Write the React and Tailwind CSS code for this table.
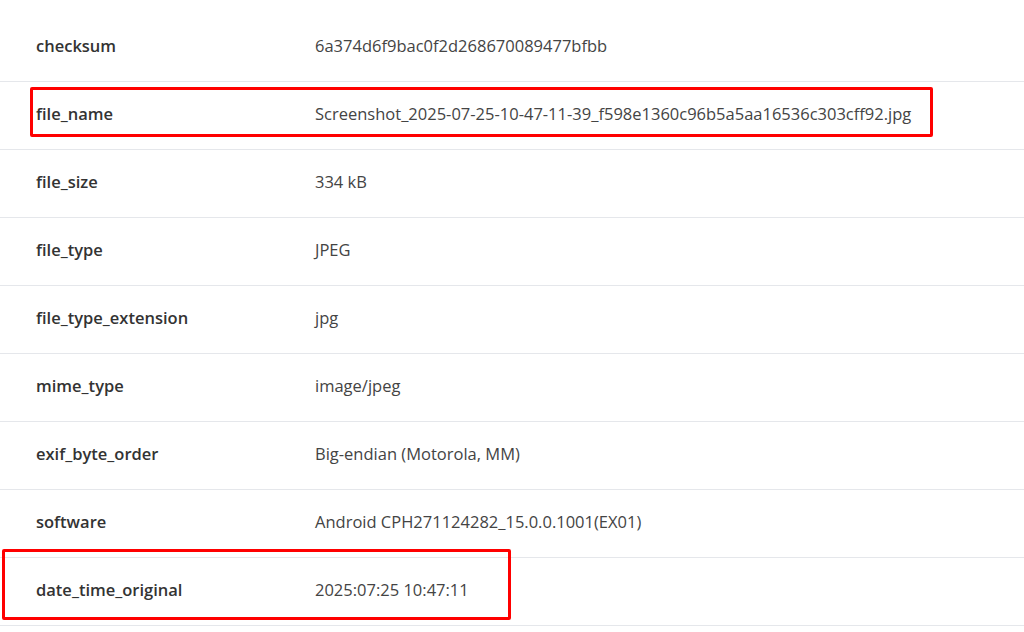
const rows = [
  ["checksum", "6a374d6f9bac0f2d268670089477bfbb"],
  ["file_name", "Screenshot_2025-07-25-10-47-11-39_f598e1360c96b5a5aa16536c303cff92.jpg"],
  ["file_size", "334 kB"],
  ["file_type", "JPEG"],
  ["file_type_extension", "jpg"],
  ["mime_type", "image/jpeg"],
  ["exif_byte_order", "Big-endian (Motorola, MM)"],
  ["software", "Android CPH271124282_15.0.0.1001(EX01)"],
  ["date_time_original", "2025:07:25 10:47:11"],
];

export default function App() {
  return (
    <div
      className="relative w-[1024px] h-[632px] overflow-hidden bg-white pt-[14px]"
      style={{ fontFamily: '"Open Sans", "Noto Sans", sans-serif' }}
    >
      {/* Metadata table */}
      <div className="flex flex-col">
        {rows.map(([key, value]) => (
          <div
            key={key}
            className="grid grid-cols-[279px_1fr] items-center h-[68px] pb-[3px] border-b border-[#e5e7eb] pl-[36px] text-[16.5px]"
          >
            <div className="font-semibold text-[#333333]">{key}</div>
            <div className="text-[#444444]">{value}</div>
          </div>
        ))}
      </div>

      {/* Red annotation boxes */}
      <div className="absolute left-[30px] top-[87px] w-[903px] h-[50px] border-[3px] border-[#ff0000] rounded-[2px]"></div>
      <div className="absolute left-[2px] top-[549px] w-[509px] h-[71px] border-[3px] border-[#ff0000] rounded-[2px]"></div>
    </div>
  );
}
